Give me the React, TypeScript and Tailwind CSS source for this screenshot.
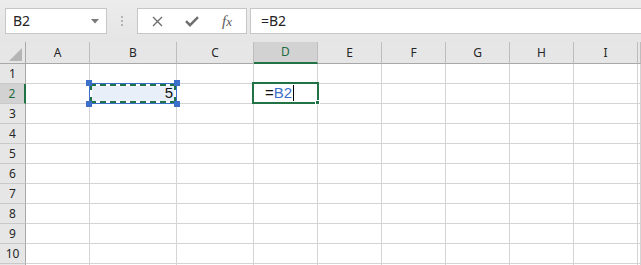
import React from 'react'

const cols = ['A', 'B', 'C', 'D', 'E', 'F', 'G', 'H', 'I', '']
const rows = [1, 2, 3, 4, 5, 6, 7, 8, 9, 10, 11]

const headFont = { fontFamily: '"Noto Sans", "Open Sans", sans-serif' }
const cellFont = { fontFamily: '"Liberation Sans", Arial, sans-serif' }

function TopBar() {
  return (
    <div className="h-[42px] flex items-start pt-[8px] bg-gradient-to-b from-[#ececec] to-[#e5e5e5]" style={headFont}>
      <div className="ml-[5px] w-[102px] h-[26px] bg-white border border-[#c6c6c6] flex items-center justify-between pl-[7px] pr-[7px]">
        <span className="text-[14px] text-[#222] leading-none">B2</span>
        <svg width="8" height="5" viewBox="0 0 8 5">
          <path d="M0 0h8L4 4.5z" fill="#7a7a7a" />
        </svg>
      </div>
      <div className="w-[30px] h-[26px] flex flex-col items-center justify-center gap-[2px]">
        <div className="w-[2px] h-[2px] bg-[#b4b4b4]" />
        <div className="w-[2px] h-[2px] bg-[#b4b4b4]" />
        <div className="w-[2px] h-[2px] bg-[#b4b4b4]" />
      </div>
      <div className="w-[110px] h-[26px] bg-white border border-[#c6c6c6] flex items-center">
        <div className="w-[38px] flex justify-center">
          <svg width="11" height="11" viewBox="0 0 11 11">
            <path d="M1 1l9 9M10 1l-9 9" stroke="#6e6e6e" strokeWidth="1.4" />
          </svg>
        </div>
        <div className="w-[32px] flex justify-center">
          <svg width="14" height="11" viewBox="0 0 14 11">
            <path d="M1 5.2l4 4L13 1.2" stroke="#6e6e6e" strokeWidth="2.4" fill="none" />
          </svg>
        </div>
        <div className="w-[38px] flex justify-center">
          <span className="italic text-[15px] text-[#5a5a5a] leading-none" style={{ fontFamily: '"Liberation Serif", serif' }}>
            f<span className="text-[13px]">x</span>
          </span>
        </div>
      </div>
      <div className="ml-[3px] flex-1 h-[26px] bg-white border-y border-l border-[#c6c6c6] flex items-center pl-[10px]">
        <span className="text-[14px] text-[#222] leading-none">=B2</span>
      </div>
    </div>
  )
}

function Corner() {
  return (
    <div className="h-[22px] bg-[#e6e6e6] border-r border-b border-[#a8a8a8] flex items-end justify-end pr-[3px] pb-[2px]">
      <svg width="13" height="13" viewBox="0 0 13 13">
        <path d="M13 0V13H0z" fill="#b5b5b5" />
      </svg>
    </div>
  )
}

export default function App() {
  return (
    <div className="w-[641px] h-[265px] overflow-hidden bg-white">
      <TopBar />
      <div className="grid grid-cols-[26px_64px_87px_77px_64px_64px_64px_64px_64px_64px_1fr] bg-[#e6e6e6]">
        <Corner />
        {cols.map((c, i) => (
          <div
            key={i}
            className={`h-[22px] flex items-center justify-center text-[12px] border-r border-[#bdbdbd] ${
              c === 'D' ? 'bg-[#d2d2d2] border-b-2 border-b-[#217346] text-[#1d6b41]' : 'bg-[#e6e6e6] border-b border-b-[#a8a8a8] text-[#262626]'
            }`}
            style={headFont}
          >
            {c}
          </div>
        ))}
        {rows.map((r) => (
          <React.Fragment key={r}>
            <div
              className={`h-[20px] flex items-center justify-center text-[12px] border-b border-b-[#c9c9c9] ${
                r === 2 ? 'bg-[#d2d2d2] border-r-2 border-r-[#217346] text-[#1d6b41]' : 'bg-[#e6e6e6] border-r border-r-[#a8a8a8] text-[#262626]'
              }`}
              style={headFont}
            >
              {r < 11 ? r : ''}
            </div>
            {cols.map((c, i) => (
              <div key={i} className="relative h-[20px] bg-white border-r border-b border-[#d4d4d4]">
                {r === 2 && c === 'B' && (
                  <div className="absolute -left-[1px] -top-[1px] -right-[1px] -bottom-[1px] z-10">
                    <div className="absolute inset-0 border border-[#3c6fca]" />
                    <div className="absolute inset-[1px] border-2 border-dashed border-[#217346] bg-white">
                      <div className="h-full bg-[#e8eff8] flex items-center justify-end pr-[1px] text-[15px] text-[#111]" style={cellFont}>
                        5
                      </div>
                    </div>
                    <div className="absolute -left-[3px] -top-[3px] w-[6px] h-[6px] bg-[#3c6fca]" />
                    <div className="absolute -right-[3px] -top-[3px] w-[6px] h-[6px] bg-[#3c6fca]" />
                    <div className="absolute -left-[3px] -bottom-[3px] w-[6px] h-[6px] bg-[#3c6fca]" />
                    <div className="absolute -right-[3px] -bottom-[3px] w-[6px] h-[6px] bg-[#3c6fca]" />
                  </div>
                )}
                {r === 2 && c === 'D' && (
                  <div className="absolute -left-[2px] -top-[2px] -right-[2px] -bottom-[1px] z-10 border-2 border-[#217346] bg-white flex items-center pl-[11px] text-[15px]" style={cellFont}>
                    <span className="text-[#111]">=</span>
                    <span className="text-[#3c6fca]">B2</span>
                    <span className="ml-[1px] w-[1px] h-[16px] bg-black" />
                    <div className="absolute -right-[3px] -bottom-[3px] w-[5px] h-[5px] bg-[#217346] border border-white" />
                  </div>
                )}
              </div>
            ))}
          </React.Fragment>
        ))}
      </div>
    </div>
  )
}
